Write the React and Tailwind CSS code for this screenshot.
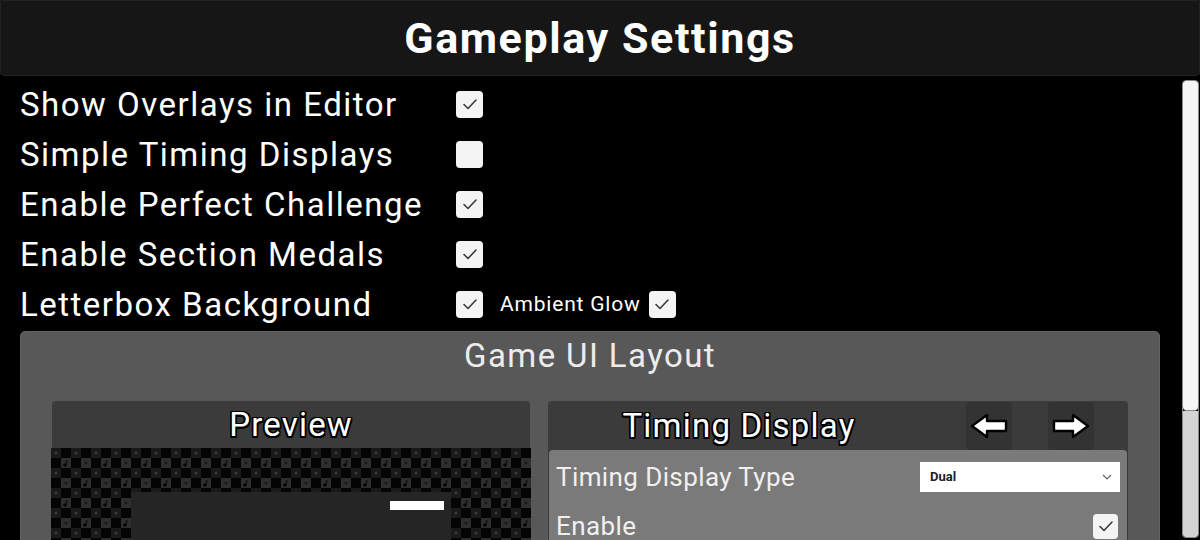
import React from "react";

const outline =
  "[text-shadow:-1.5px_-1.5px_0_#000,1.5px_-1.5px_0_#000,-1.5px_1.5px_0_#000,1.5px_1.5px_0_#000,0_-1.5px_0_#000,0_1.5px_0_#000,-1.5px_0_0_#000,1.5px_0_0_#000]";

function Checkbox({ checked = false, size = "w-[27px] h-[27px]" }) {
  return (
    <div className={`${size} rounded-[4px] bg-[#f4f4f4] flex items-center justify-center shrink-0`}>
      {checked && (
        <svg width="16" height="13" viewBox="0 0 16 13" fill="none">
          <path d="M2 6.5 L6 10.5 L14 2" stroke="#3a3a3a" strokeWidth="1.6" strokeLinecap="round" strokeLinejoin="round" />
        </svg>
      )}
    </div>
  );
}

function SettingRow({ label, checked, children }) {
  return (
    <div className="h-[50px] flex items-center">
      <span className="w-[436px] text-[33px] tracking-[1.5px] text-white leading-none">{label}</span>
      <Checkbox checked={checked} />
      {children}
    </div>
  );
}

function Checker() {
  return (
    <svg width="100%" height="100%" className="block">
      <defs>
        <pattern id="chk" width="40" height="40" patternUnits="userSpaceOnUse">
          <rect width="40" height="40" fill="#040404" />
          {/* row 0 */}
          <rect x="0" y="0" width="10" height="10" fill="#1a1a1a" />
          <rect x="20" y="0" width="10" height="10" fill="#1a1a1a" />
          <circle cx="5" cy="5" r="1.6" fill="#383838" />
          <circle cx="25" cy="5" r="1.6" fill="#383838" />
          {/* row 1 */}
          <rect x="10" y="10" width="10" height="10" fill="#2e2e2e" />
          <rect x="30" y="10" width="10" height="10" fill="#2e2e2e" />
          <circle cx="35" cy="15" r="1.6" fill="#1a1a1a" />
          {/* row 2 */}
          <rect x="0" y="20" width="10" height="10" fill="#1a1a1a" />
          <rect x="20" y="20" width="10" height="10" fill="#1a1a1a" />
          <circle cx="5" cy="25" r="1.6" fill="#383838" />
          <circle cx="25" cy="25" r="1.6" fill="#383838" />
          {/* row 3 */}
          <rect x="10" y="30" width="10" height="10" fill="#2e2e2e" />
          <rect x="30" y="30" width="10" height="10" fill="#2e2e2e" />
          <circle cx="15" cy="35" r="1.6" fill="#1a1a1a" />
          {/* notes */}
          <g fill="#040404" stroke="#040404" strokeWidth="0.9">
            <ellipse cx="14" cy="17" rx="1.5" ry="1.2" />
            <path d="M15.3 17 V12.5 L17.2 13.8" fill="none" />
            <ellipse cx="34" cy="37" rx="1.5" ry="1.2" />
            <path d="M35.3 37 V32.5 L37.2 33.8" fill="none" />
          </g>
        </pattern>
      </defs>
      <rect width="100%" height="100%" fill="url(#chk)" />
    </svg>
  );
}

function ArrowButton({ dir }) {
  return (
    <div className="w-[46px] h-[48px] rounded-[4px] bg-[#333333] flex items-center justify-center">
      <svg width="40" height="28" viewBox="0 0 40 28">
        <path
          d={dir === "left" ? "M3 14 L18 3 V9 H37 V19 H18 V25 Z" : "M37 14 L22 3 V9 H3 V19 H22 V25 Z"}
          fill="#fff"
          stroke="#000"
          strokeWidth="2.4"
          strokeLinejoin="round"
        />
      </svg>
    </div>
  );
}

export default function App() {
  return (
    <div className="w-[1200px] h-[540px] bg-black overflow-hidden flex flex-col font-['Roboto',sans-serif]">
      {/* Header */}
      <div className="h-[76px] shrink-0 bg-[#161616] border border-[#222222] rounded-b-[4px] flex items-center justify-center">
        <h1 className="text-[43px] font-bold text-white leading-none tracking-[1.6px]">
          Gameplay Settings
        </h1>
      </div>

      <div className="flex flex-1 min-h-0">
        {/* Main content */}
        <div className="flex-1 pl-5 pr-[22px] pt-[3px] min-w-0">
          <SettingRow label="Show Overlays in Editor" checked />
          <SettingRow label="Simple Timing Displays" checked={false} />
          <SettingRow label="Enable Perfect Challenge" checked />
          <SettingRow label="Enable Section Medals" checked />
          <SettingRow label="Letterbox Background" checked>
            <span className="ml-[17px] mr-[8px] text-[21px] tracking-[0.8px] text-white leading-none">Ambient Glow</span>
            <Checkbox checked />
          </SettingRow>

          {/* Game UI Layout */}
          <div className="mt-[2px] h-[260px] bg-[#585858] rounded-[5px] border border-[#626262] px-[31px] pt-[5px]">
            <div className="text-center text-[33px] tracking-[1.4px] text-[#ececec] leading-[38px]">Game UI Layout</div>
            <div className="mt-[26px] flex gap-[18px] items-start">
              {/* Preview */}
              <div className="w-[478px] shrink-0 flex flex-col">
                <div className="h-[47px] bg-[#3b3b3b] rounded-t-[4px] flex items-center justify-center">
                  <span className={`text-[33px] tracking-[1.2px] text-white leading-none ${outline}`}>Preview</span>
                </div>
                <div className="relative h-[100px] -mx-px">
                  <Checker />
                  <div className="absolute left-[80px] top-[44px] w-[320px] h-[60px] bg-[#252525]">
                    <div className="absolute left-[259px] top-[9px] w-[54px] h-[9px] bg-white" />
                  </div>
                </div>
              </div>

              {/* Timing Display */}
              <div className="flex-1 flex flex-col bg-[#3b3b3b] rounded-t-[4px]">
                <div className="h-[49px] flex items-center">
                  <div className="w-[382px] flex justify-center">
                    <span className={`text-[33px] tracking-[1.2px] text-white leading-none ${outline}`}>Timing Display</span>
                  </div>
                  <div className="ml-[36px]">
                    <ArrowButton dir="left" />
                  </div>
                  <div className="ml-[36px]">
                    <ArrowButton dir="right" />
                  </div>
                </div>
                <div className="mx-px bg-[#7a7a7a] rounded-t-[4px] h-[100px] px-[7px] pt-[12px]">
                  <div className="h-[30px] flex items-center justify-between">
                    <span className="text-[26px] tracking-[0.4px] text-[#f0f0f0] leading-none">Timing Display Type</span>
                    <div className="w-[200px] h-[30px] bg-white flex items-center justify-between pl-[10px] pr-[8px]">
                      <span className="text-[13px] font-bold text-[#222]">Dual</span>
                      <svg width="10" height="6" viewBox="0 0 10 6">
                        <path d="M1 1 L5 5 L9 1" stroke="#666" strokeWidth="1.2" fill="none" />
                      </svg>
                    </div>
                  </div>
                  <div className="mt-[20px] h-[28px] flex items-center justify-between">
                    <span className="text-[26px] tracking-[0.4px] text-[#f0f0f0] leading-none">Enable</span>
                    <div className="mr-[2px]">
                      <Checkbox checked size="w-[25px] h-[25px]" />
                    </div>
                  </div>
                </div>
              </div>
            </div>
          </div>
        </div>

        {/* Scrollbar */}
        <div className="w-[17px] mr-[1px] mt-[4px] mb-[2px] flex flex-col rounded-[4px] overflow-hidden border border-[#8a8a8a]">
          <div className="h-[330px] bg-[#f5f5f5] rounded-b-[4px] border-b border-[#8a8a8a]" />
          <div className="flex-1 bg-[#d4d4d4]" />
        </div>
      </div>
    </div>
  );
}
